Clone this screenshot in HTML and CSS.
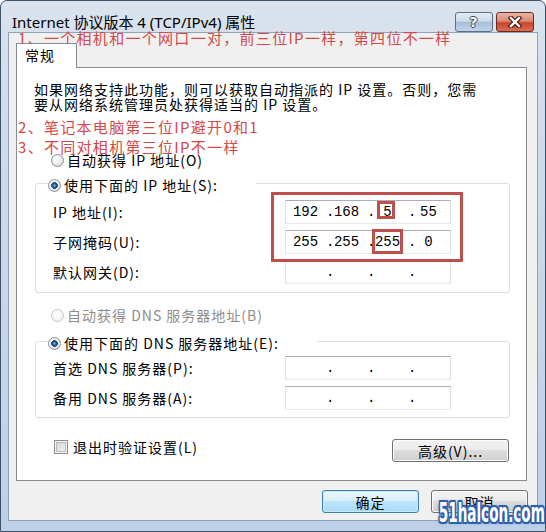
FILE: index.html
```html
<!DOCTYPE html>
<html lang="zh-CN">
<head>
    <meta charset="UTF-8">
    <meta name="viewport" content="width=device-width, initial-scale=1.0">
    <title>Internet 协议版本 4 (TCP/IPv4) 属性</title>
    <link rel="stylesheet" href="styles.css">
</head>
<body>
    <div class="window">
        <div class="titlebar">
            <span class="title">Internet 协议版本 4 (TCP/IPv4) 属性</span>
            <div class="caption-buttons">
                <span class="cap help">?</span>
                <span class="cap close">
                    <svg width="16" height="12" viewBox="0 0 16 12">
                        <path d="M4 2 L12 10 M12 2 L4 10" stroke="#4b1c14" stroke-width="4.6" stroke-linecap="square"/>
                        <path d="M4 2 L12 10 M12 2 L4 10" stroke="#fff" stroke-width="2.4" stroke-linecap="square"/>
                    </svg>
                </span>
            </div>
        </div>
        <div class="client">
            <div class="tabs"><span class="tab">常规</span></div>
            <div class="panel">
                <p class="desc">如果网络支持此功能，则可以获取自动指派的 IP 设置。否则，您需<br>要从网络系统管理员处获得适当的 IP 设置。</p>

                <div class="option first"><span class="radio"></span>自动获得 IP 地址(O)</div>
                <fieldset class="group ip-group">
                    <legend class="option"><span class="radio checked"></span>使用下面的 IP 地址(S):</legend>
                    <div class="rows">
                        <span class="label">IP 地址(I):</span>
                        <div class="ip"><span class="oct">192</span><span class="dot">.</span><span class="oct">168</span><span class="dot">.</span><span class="oct">5</span><span class="dot">.</span><span class="oct">55</span></div>
                        <span class="label">子网掩码(U):</span>
                        <div class="ip"><span class="oct">255</span><span class="dot">.</span><span class="oct">255</span><span class="dot">.</span><span class="oct">255</span><span class="dot">.</span><span class="oct">0</span></div>
                        <span class="label">默认网关(D):</span>
                        <div class="ip"><span class="oct"></span><span class="dot">.</span><span class="oct"></span><span class="dot">.</span><span class="oct"></span><span class="dot">.</span><span class="oct"></span></div>
                    </div>
                </fieldset>

                <div class="option disabled dns-auto"><span class="radio"></span>自动获得 DNS 服务器地址(B)</div>
                <fieldset class="group dns-group">
                    <legend class="option"><span class="radio checked"></span>使用下面的 DNS 服务器地址(E):</legend>
                    <div class="rows">
                        <span class="label">首选 DNS 服务器(P):</span>
                        <div class="ip"><span class="oct"></span><span class="dot">.</span><span class="oct"></span><span class="dot">.</span><span class="oct"></span><span class="dot">.</span><span class="oct"></span></div>
                        <span class="label">备用 DNS 服务器(A):</span>
                        <div class="ip"><span class="oct"></span><span class="dot">.</span><span class="oct"></span><span class="dot">.</span><span class="oct"></span><span class="dot">.</span><span class="oct"></span></div>
                    </div>
                </fieldset>

                <div class="footer-row">
                    <div class="option check-row"><span class="check"></span>退出时验证设置(L)</div>
                    <span class="btn advanced">高级(V)...</span>
                </div>
            </div>
            <div class="actions">
                <span class="btn default">确定</span>
                <span class="btn">取消</span>
            </div>
        </div>
    </div>

    <!-- red notes drawn over the screenshot -->
    <div class="annotations">
        <div class="note note1">1、一个相机和一个网口一对，前三位IP一样，第四位不一样</div>
        <div class="note note2">2、笔记本电脑第三位IP避开0和1</div>
        <div class="note note3">3、不同对相机第三位IP不一样</div>
        <div class="mark mark-big"></div>
        <div class="mark mark-ip"></div>
        <div class="mark mark-mask"></div>
        <div class="watermark">51halcon.com</div>
    </div>
</body>
</html>
```

FILE: styles.css
```css
body {
    margin: 0;
    position: relative;
    width: 546px;
    height: 532px;
    overflow: hidden;
    font-family: "Noto Sans CJK SC", sans-serif;
    font-size: 14px;
    letter-spacing: 1px;
    color: #000;
}
.window {
    box-sizing: border-box;
    width: 546px;
    height: 532px;
    display: flex;
    flex-direction: column;
    border: 1px solid #3f5166;
    border-radius: 7px 7px 0 0;
    padding: 0 7px 10px 7px;
    background: linear-gradient(180deg, #dae3ed 0%, #cfdbe9 25%, #bcd0e7 100%);
}
.titlebar {
    height: 31px;
    flex: none;
    display: flex;
    align-items: flex-end;
    padding: 0 4px;
}
.title {
    font-family: "Noto Sans", "Noto Sans CJK SC", sans-serif;
    font-size: 15px;
    letter-spacing: 0;
    line-height: 20px;
}
.caption-buttons {
    margin-left: auto;
    display: flex;
    gap: 3px;
}
.cap {
    box-sizing: border-box;
    width: 38px;
    height: 20px;
    border-radius: 3px;
    display: flex;
    align-items: center;
    justify-content: center;
}
.help {
    border: 1px solid #5d6f86;
    background: linear-gradient(180deg, #e4ecf6 0%, #cddbeb 45%, #a9bed8 52%, #c0d3e8 100%);
    color: #fff;
    font: bold 14px "DejaVu Sans", sans-serif;
    text-shadow: 1px 0 #37475c, -1px 0 #37475c, 0 1px #37475c, 0 -1px #37475c;
}
.close {
    border: 1px solid #6b2a20;
    background: linear-gradient(180deg, #ebb4a6 0%, #dc8b78 45%, #c6452d 55%, #d8714f 100%);
}

.client {
    flex: 1;
    display: flex;
    flex-direction: column;
    background: #f0f0f0;
    border: 1px solid #8fa4bb;
    padding: 10px 10px 7px 7px;
}
.tabs {
    display: flex;
}
.tab {
    box-sizing: border-box;
    width: 61px;
    height: 25px;
    border: 1px solid #898c95;
    border-bottom: none;
    background: #fff;
    padding-left: 8px;
    line-height: 23px;
    margin-bottom: -1px;
    position: relative;
    z-index: 1;
}
.panel {
    flex: 1;
    display: flex;
    flex-direction: column;
    background: #fff;
    border: 1px solid #898c95;
    padding: 0 16px 0 18px;
}
.desc {
    margin: 14px 0 0 -1px;
    line-height: 15px;
}

.option {
    display: flex;
    align-items: center;
    height: 18px;
    gap: 3px;
}
.first {
    margin: 39px 0 0 16px;
}
.dns-auto {
    margin: 13px 0 0 16px;
}
.disabled {
    color: #8d8d8d;
}
.radio {
    box-sizing: border-box;
    flex: none;
    width: 13px;
    height: 13px;
    border-radius: 50%;
    border: 1px solid #8e8f8f;
    background: radial-gradient(circle at 40% 35%, #ffffff 0%, #eeeeee 45%, #c9ced4 100%);
}
.radio.checked {
    background: radial-gradient(circle at 50% 50%, #7fb4e6 0, #2d6db0 1.5px, #0f3a6a 3px, transparent 3.6px),
                radial-gradient(circle at 40% 35%, #ffffff 0%, #eeeeee 45%, #c9ced4 100%);
}
.disabled .radio {
    border-color: #c4c6c8;
    background: radial-gradient(circle at 40% 35%, #ffffff 0%, #f4f4f4 60%, #e2e4e6 100%);
}

.group {
    margin: 3px 0 0;
    padding: 0;
    min-width: 0;
    border: 1px solid #d5dfe5;
    border-radius: 3px;
}
.dns-group {
    margin-top: 6px;
}
.group legend {
    margin-left: 12px;
    padding: 4px 38px 0 0;
}
.rows {
    display: grid;
    grid-template-columns: 232px 166px;
    row-gap: 6px;
    align-items: center;
    padding: 6px 0 8px 17px;
}
.dns-group .rows {
    padding: 4px 0 7px 17px;
}
.ip {
    box-sizing: border-box;
    width: 166px;
    height: 24px;
    display: flex;
    align-items: center;
    padding-left: 5px;
    border: 1px solid;
    border-color: #abadb3 #dbdfe6 #e3e9ef #e2e3ea;
    background: #fff;
    font-family: "Liberation Mono", monospace;
    font-size: 14px;
    letter-spacing: 0;
}
.oct {
    box-sizing: border-box;
    width: 35px;
    padding-right: 6px;
    text-align: center;
}
.dot {
    width: 6px;
    text-align: center;
}

.footer-row {
    display: flex;
    justify-content: space-between;
    align-items: flex-start;
    margin-top: 20px;
}
.check-row {
    margin-left: 19px;
    gap: 5px;
}
.check {
    box-sizing: border-box;
    width: 14px;
    height: 14px;
    border: 1px solid #8e8f8f;
    background: linear-gradient(135deg, #cdd1d6 0%, #f6f6f6 100%);
    box-shadow: inset 0 0 0 1px #f4f4f4, inset 0 0 0 2px #b9bcc0;
}
.btn {
    box-sizing: border-box;
    width: 97px;
    height: 23px;
    display: flex;
    align-items: center;
    justify-content: center;
    border: 1px solid #707070;
    border-radius: 3px;
    background: linear-gradient(180deg, #f3f3f3 0%, #ebebeb 45%, #dddddd 50%, #cfcfcf 100%);
    box-shadow: inset 0 0 0 1px #fbfbfb;
}
.advanced {
    width: 117px;
    margin: 1px 1px 0 0;
}
.btn.default {
    border-color: #3c7fb1;
    background: linear-gradient(180deg, #eaf6fd 0%, #d9f0fc 45%, #bee6fd 50%, #a7d9f5 100%);
    box-shadow: inset 0 0 0 1px #c6e8f8;
}
.actions {
    display: flex;
    justify-content: flex-end;
    gap: 12px;
    margin-top: 9px;
    margin-right: -1px;
}

.annotations {
    position: absolute;
    inset: 0;
    pointer-events: none;
}
.note {
    position: absolute;
    left: 18px;
    color: #d44848;
    font-size: 15px;
    line-height: 16px;
    letter-spacing: 1.3px;
    white-space: nowrap;
}
.note1 { top: 30px; }
.note2 { top: 119px; }
.note3 { top: 139px; }
.mark {
    position: absolute;
    box-sizing: border-box;
    border: 3px solid #bf4f4b;
}
.mark-big { left: 271px; top: 192px; width: 192px; height: 70px; }
.mark-ip { left: 377px; top: 201px; width: 18px; height: 18px; }
.mark-mask { left: 372px; top: 229px; width: 31px; height: 25px; }
.watermark {
    position: absolute;
    right: 1px;
    bottom: 5px;
    font-family: "Liberation Sans Narrow", "DejaVu Sans Condensed", sans-serif;
    font-weight: bold;
    font-size: 26px;
    line-height: 28px;
    letter-spacing: 0;
    color: #fff;
    transform: scaleX(0.58);
    transform-origin: right center;
    text-shadow: 2px 0 #2a62b0, -2px 0 #2a62b0, 0 2px #2a62b0, 0 -2px #2a62b0,
                 2px 2px #2a62b0, -2px -2px #2a62b0, 2px -2px #2a62b0, -2px 2px #2a62b0,
                 0 0 5px #1b4c96;
}
```
